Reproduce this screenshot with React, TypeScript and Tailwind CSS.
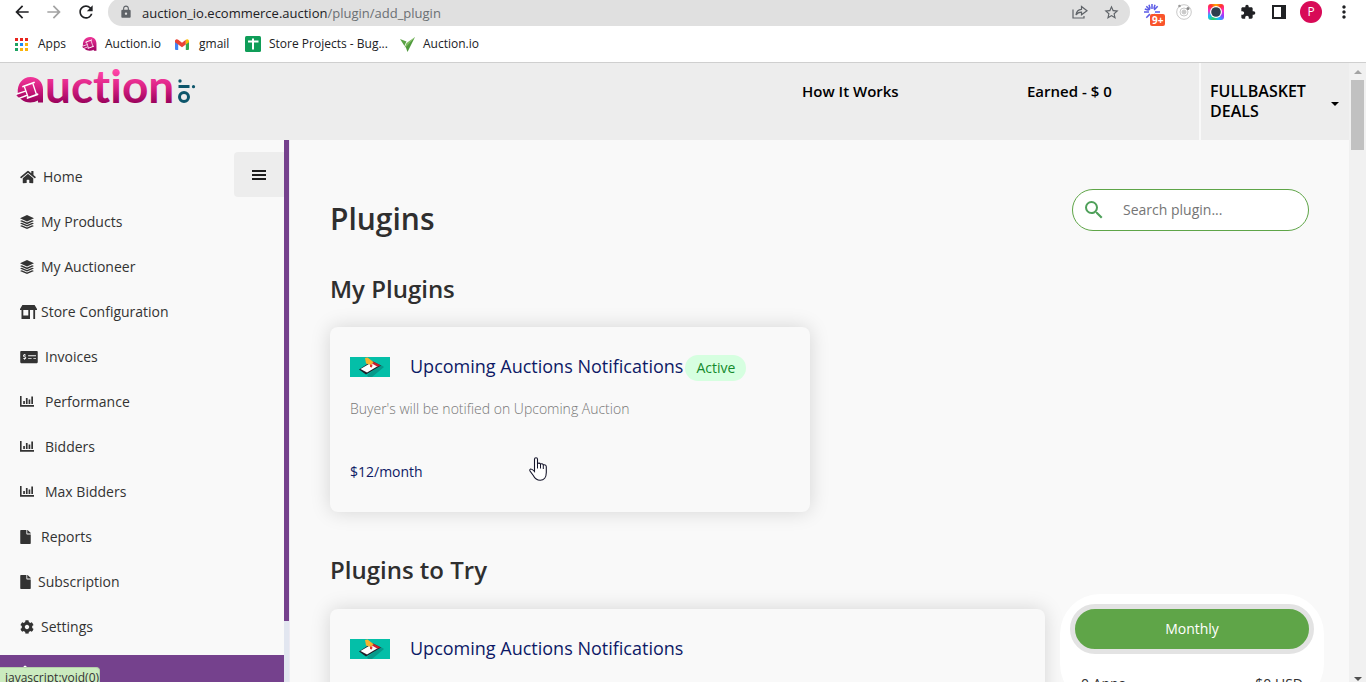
import type { ComponentType, ReactNode } from "react";
import {
  FaHome,
  FaStore,
  FaMoneyCheckAlt,
  FaFile,
  FaCog,
  FaPuzzlePiece,
} from "react-icons/fa";
import {
  MdArrowBack,
  MdArrowForward,
  MdRefresh,
  MdLock,
  MdStarBorder,
  MdExtension,
  MdMoreVert,
  MdSearch,
} from "react-icons/md";

type IconType = ComponentType<{ className?: string }>;

function LayersIcon({ className }: { className?: string }) {
  return (
    <svg viewBox="0 0 14 14" className={className} fill="currentColor" aria-hidden="true">
      <path d="M7 0 14 3.2 7 6.400 0 3.200Z" />
      <path d="M0 6 1.800 5.200 7 7.600 12.200 5.200 14 6 7 9.200Z" />
      <path d="M0 8.500 1.800 7.700 7 10.100 12.200 7.700 14 8.500 7 11.600Z" />
      <path d="M0 11 1.800 10.200 7 12.500 12.200 10.200 14 11 7 14Z" />
    </svg>
  );
}

function StoreIcon({ className }: { className?: string }) {
  return (
    <svg viewBox="0 0 17 14" className={className} fill="currentColor" aria-hidden="true">
      <path d="M2.400 0h12.200L17 4v1H0V4Z" />
      <path d="M1.500 5h1.800v5.500h5V5H10v9H1.500ZM13.300 5h1.800v9h-1.800Z" />
    </svg>
  );
}

function BarsIcon({ className }: { className?: string }) {
  return (
    <svg viewBox="0 0 14 11" className={className} fill="currentColor" aria-hidden="true">
      <path d="M0 0h1.600v9H14v1.800H0ZM3.200 5h1.700v3H3.200ZM5.900 2h1.700v6H5.900ZM8.600 3.500h1.700V8H8.600ZM11.300.5H13V8h-1.700Z" />
    </svg>
  );
}

type NavItem = { label: string; icon: IconType; iconClass: string; slot: string };

const navItems: NavItem[] = [
  { label: "Home", icon: FaHome, iconClass: "h-[14px] w-4", slot: "w-[23px]" },
  { label: "My Products", icon: LayersIcon, iconClass: "size-[14px]", slot: "w-[21px]" },
  { label: "My Auctioneer", icon: LayersIcon, iconClass: "size-[14px]", slot: "w-[21px]" },
  { label: "Store Configuration", icon: StoreIcon, iconClass: "h-[14px] w-[17px]", slot: "w-[21px]" },
  { label: "Invoices", icon: FaMoneyCheckAlt, iconClass: "h-[14px] w-[18px]", slot: "w-[25px]" },
  { label: "Performance", icon: BarsIcon, iconClass: "h-[11px] w-[14px]", slot: "w-[25px]" },
  { label: "Bidders", icon: BarsIcon, iconClass: "h-[11px] w-[14px]", slot: "w-[25px]" },
  { label: "Max Bidders", icon: BarsIcon, iconClass: "h-[11px] w-[14px]", slot: "w-[25px]" },
  { label: "Reports", icon: FaFile, iconClass: "h-[14px] w-[11px]", slot: "w-[21px]" },
  { label: "Subscription", icon: FaFile, iconClass: "h-[14px] w-[11px]", slot: "w-[18px]" },
  { label: "Settings", icon: FaCog, iconClass: "size-[14px]", slot: "w-[21px]" },
];

function GavelShape({ fill }: { fill: string }) {
  return (
    <g>
      <path
        d="M14.500 0C22 0 27 5 27 12.500V25.500H22V23.500C17 26.500 9 26 5.500 22.500L2 20 0 17.800 1.800 16C1 7 6.500 0 14.500 0Z"
        fill={fill}
      />
      <g fill="none" stroke="#fff" strokeLinecap="round" strokeLinejoin="round">
        <path d="M7 9.500 18 5.500" strokeWidth="1.800" />
        <path d="M11.500 21 21.500 17.300" strokeWidth="1.800" />
        <path d="M8.500 10 12 20M17 7 20.300 17" strokeWidth="1.300" />
        <path d="M0 17.300 9.500 14.200" strokeWidth="1.400" />
        <path d="M3 21.300 10.500 18.500" strokeWidth="1.400" />
      </g>
    </g>
  );
}

function Emblem({ className }: { className?: string }) {
  return (
    <svg viewBox="0 0 28 26" className={className} aria-hidden="true">
      <defs>
        <linearGradient id="mark" x1="0" y1="0" x2="0" y2="1">
          <stop offset="0" stopColor="#f0389a" />
          <stop offset="1" stopColor="#a00060" />
        </linearGradient>
      </defs>
      <GavelShape fill="url(#mark)" />
    </svg>
  );
}

function Logo() {
  return (
    <svg viewBox="0 0 184 40" className="h-10 w-[184px]" role="img" aria-label="auction.io">
      <defs>
        <linearGradient id="word" x1="0" y1="3" x2="0" y2="36" gradientUnits="userSpaceOnUse">
          <stop offset="0" stopColor="#ff45a8" />
          <stop offset="0.500" stopColor="#d92083" />
          <stop offset="1" stopColor="#96005a" />
        </linearGradient>
        <linearGradient id="badge" x1="0" y1="-6" x2="0" y2="26" gradientUnits="userSpaceOnUse">
          <stop offset="0" stopColor="#ff45a8" />
          <stop offset="0.500" stopColor="#d92083" />
          <stop offset="1" stopColor="#96005a" />
        </linearGradient>
      </defs>
      <g transform="translate(0 9)">
        <GavelShape fill="url(#badge)" />
      </g>
      <text
        x="29"
        y="35"
        fontFamily="Lato, sans-serif"
        fontWeight="700"
        fontSize="46"
        fill="url(#word)"
        style={{ fontVariantLigatures: "none" }}
      >
        uction
      </text>
      <g fill="#0d566b">
        <circle cx="164" cy="13" r="1.700" />
        <rect x="162.500" y="17" width="11" height="3" />
        <circle cx="177.500" cy="18.700" r="1.600" />
        <circle cx="168" cy="29" r="4.500" fill="none" stroke="#0d566b" strokeWidth="3" />
      </g>
    </svg>
  );
}

const appDots = [
  "#e8251d", "#e8251d", "#e8251d",
  "#1da362", "#1a8af5", "#fbb40a",
  "#1da362", "#fbb40a", "#fbb40a",
];

function AppsIcon() {
  return (
    <svg viewBox="0 0 13 13" className="size-[13px]" aria-hidden="true">
      {appDots.map((c, i) => (
        <rect key={i} x={(i % 3) * 5} y={Math.floor(i / 3) * 5} width="3" height="3" fill={c} />
      ))}
    </svg>
  );
}

function GmailIcon() {
  return (
    <svg viewBox="0 0 14 11" className="h-[11px] w-[14px]" aria-hidden="true">
      <path d="M0 2v8q0 1 1 1h2.200V4Z" fill="#4285f4" />
      <path d="M14 2v8q0 1-1 1h-2.200V4Z" fill="#34a853" />
      <path d="M0 1.500Q1.500-.6 3.200.8L7 3.700 10.800.8V5.500L7 8.300 3.200 5.500 0 3.200Z" fill="#ea4335" />
      <path d="M10.800.8Q12.500-.6 14 1.500V3.200L10.800 5.500Z" fill="#fbbc04" />
    </svg>
  );
}

function SheetIcon() {
  return (
    <svg viewBox="0 0 16 16" className="size-4" aria-hidden="true">
      <rect width="16" height="16" rx="1.500" fill="#0f9d58" />
      <path d="M3 5.500h10.500M8 2.500v11" stroke="#fff" strokeWidth="2" />
    </svg>
  );
}

function PlaneIcon() {
  return (
    <svg viewBox="0 0 15 15" className="size-[15px]" aria-hidden="true">
      <path d="M15 0 7.500 15 5.500 9.500Z" fill="#4f9a3c" />
      <path d="M15 0 6.500 6 4.500 10.500 6 10Z" fill="#7dbb5f" />
      <path d="M0 2 6.500 4.500 5.500 6.500 4.500 9Z" fill="#5aa345" />
    </svg>
  );
}

function Bookmark({ icon, label, width }: { icon: ReactNode; label: string; width: string }) {
  return (
    <a href="#" className={`flex shrink-0 items-center gap-2 whitespace-nowrap ${width}`}>
      {icon}
      <span>{label}</span>
    </a>
  );
}

function BrowserBar() {
  return (
    <div className="shrink-0 border-b border-[#cfcfcf] bg-white font-['Open_Sans',sans-serif]">
      <div className="flex h-[26px] items-end overflow-hidden pr-3 pl-3">
        <div className="flex h-7 w-24 shrink-0 items-center gap-3 text-[#202124]">
          <button aria-label="Back"><MdArrowBack className="size-5" /></button>
          <button aria-label="Forward"><MdArrowForward className="size-5 text-[#a3a3a3]" /></button>
          <button aria-label="Reload"><MdRefresh className="size-5" /></button>
        </div>
        <div className="flex h-7 flex-1 items-center rounded-full bg-[#e0e0e0] pr-[10px] pl-[11px]">
          <MdLock className="mr-[9px] size-[14px] text-[#5f6368]" />
          <span className="flex-1 pt-px text-[13px] leading-5 text-[#202124]">
            auction_io.ecommerce.auction<span className="text-[#6b6f73]">/plugin/add_plugin</span>
          </span>
          <button aria-label="Share" className="mr-[15px]">
            <svg viewBox="0 0 16 14" className="h-[14px] w-4" fill="none" stroke="#5f6368" strokeWidth="1.200">
              <path d="M1 4.500V13H12V11" />
              <path d="M4 10C4.300 6.500 6.500 4.500 9.500 4.300V1.500L15 5.700 9.500 9.800V7.200C7 7.200 5.300 8 4 10Z" />
            </svg>
          </button>
          <button aria-label="Bookmark this page"><MdStarBorder className="size-[17px] text-[#5f6368]" /></button>
        </div>
        <div className="ml-[14px] flex h-7 shrink-0 items-center gap-4">
          <button aria-label="Extension with new items" className="relative">
            <svg viewBox="0 0 16 16" className="size-4" stroke="#5b5be6" strokeWidth="1.500">
              <path d="M8 0v5M8 11v5M0 8h5M11 8h5M2.300 2.300l3.600 3.600M10.100 10.100l3.600 3.600M13.700 2.300l-3.600 3.600M5.900 10.100l-3.600 3.600M5 .8l1.200 4M11 .8l-1.200 4M.8 5l4 1.200" />
            </svg>
            <span className="absolute top-[10px] left-[6px] rounded-[2px] bg-[#f9542b] px-[2px] text-[10px] leading-3 font-bold text-white">9+</span>
          </button>
          <button aria-label="Orbit extension">
            <svg viewBox="0 0 16 16" className="size-4" fill="none" stroke="#c9c9c9">
              <circle cx="8" cy="8" r="7.300" />
              <circle cx="8" cy="8" r="4" />
              <circle cx="8" cy="8" r="2" fill="#c9c9c9" />
              <circle cx="3.500" cy="2" r="1.300" fill="#999" stroke="none" />
              <circle cx="12" cy="4.500" r="1.500" fill="#888" stroke="none" />
            </svg>
          </button>
          <button aria-label="Capture" className="flex size-4 items-center justify-center rounded-[3px] bg-[conic-gradient(#ffb000,#ff3030,#ff2bd0,#9040ff,#10c0ff,#30d060,#10c0ff,#ff2bd0,#ff3030,#ffb000)]">
            <svg viewBox="0 0 14 14" className="size-[14px]">
              <circle cx="7" cy="7" r="6" fill="#fff" />
              <circle cx="7" cy="7" r="4.800" fill="#2d3f4e" />
            </svg>
          </button>
          <button aria-label="Extensions"><MdExtension className="size-4 text-[#202124]" /></button>
          <button aria-label="Side panel">
            <svg viewBox="0 0 14 14" className="size-[14px]">
              <rect width="14" height="14" fill="#202124" />
              <rect x="2" y="2" width="7" height="10" fill="#fff" />
            </svg>
          </button>
          <button aria-label="Profile" className="-ml-0.5 flex size-[22px] items-center justify-center rounded-full bg-[#d80a57] text-[12px] leading-none text-white">P</button>
          <button aria-label="Menu"><MdMoreVert className="-ml-1 size-5 text-[#202124]" /></button>
        </div>
      </div>
      <div className="flex h-9 items-center pl-[15px] text-[12px] text-[#202124]">
        <Bookmark width="w-[67px]" label="Apps" icon={<span className="w-[15px]"><AppsIcon /></span>} />
        <Bookmark width="w-[93px]" label="Auction.io" icon={<Emblem className="h-4 w-[15px]" />} />
        <Bookmark width="w-[70px]" label="gmail" icon={<span className="w-4"><GmailIcon /></span>} />
        <Bookmark width="w-[155px]" label="Store Projects - Bug..." icon={<SheetIcon />} />
        <Bookmark width="w-[90px]" label="Auction.io" icon={<PlaneIcon />} />
      </div>
    </div>
  );
}

function SiteHeader() {
  return (
    <header className="flex h-[77px] shrink-0 bg-[#ededed] text-[15px] leading-5 font-semibold text-black">
      <a href="#" className="mt-[5px] ml-4 h-10"><Logo /></a>
      <nav className="ml-auto flex pt-[18px]">
        <a href="#" className="w-[225px]">How It Works</a>
        <a href="#" className="w-[172px]">Earned - $ 0</a>
      </nav>
      <button className="flex w-[150px] items-start justify-between border-l-2 border-[#f9f9f9] pt-[18px] pr-[10px] pl-[9px] text-left text-[16px] leading-5">
        <span className="w-[110px]">FULLBASKET DEALS</span>
        <svg viewBox="0 0 8 4" className="mt-[21px] h-1 w-2"><path d="M0 0h8L4 4Z" /></svg>
      </button>
    </header>
  );
}

function Sidebar() {
  return (
    <aside className="relative flex w-[290px] shrink-0">
      <nav className="min-w-0 flex-1 pt-[14px]">
        {navItems.map(({ label, icon: Icon, iconClass, slot }) => (
          <a key={label} href="#" className="flex h-[45px] items-center pl-5 text-[14px] text-[#333]">
            <span className={`shrink-0 ${slot}`}><Icon className={iconClass} /></span>
            {label}
          </a>
        ))}
        <a href="#" className="mt-[6px] flex h-[45px] items-start bg-[#75418d] pt-[7px] pl-5 text-[14px] text-white">
          <span className="w-[21px] shrink-0 pt-[3px]"><FaPuzzlePiece className="size-[14px]" /></span>
          Plugins
        </a>
      </nav>
      <div className="w-[6px] border-r border-[#eceaf2] bg-[#e2e6f0]">
        <div className="h-[481px] bg-[#75418d]" />
      </div>
      <button aria-label="Toggle menu" className="absolute top-3 right-[6px] flex h-[45px] w-[50px] items-center justify-center rounded-l bg-[#ededed]">
        <svg viewBox="0 0 14 10" className="h-[10px] w-[14px]" fill="#1d1d1d">
          <path d="M0 0h14v2H0ZM0 4h14v2H0ZM0 8h14v2H0Z" />
        </svg>
      </button>
    </aside>
  );
}

function PluginArt() {
  return (
    <svg viewBox="0 0 40 20" className="h-5 w-10" aria-hidden="true">
      <rect width="40" height="20" fill="#04bfa8" />
      <path d="M17 18 31 8 34 10 22 20H18Z" fill="#07998a" />
      <path d="M9 12.500 22 4 31 8.500 16 17.500Z" fill="#1d1d26" />
      <path d="M10.500 12 21.500 5.500 28 9 17 15.500Z" fill="#fff" />
      <path d="M23 4.500 30.500 8.300 27.500 9.800 22 6.500Z" fill="#c7202c" />
      <path d="M15 1 17.500.5 23.500 5 21 8 16 6.500Z" fill="#f5b32f" />
      <path d="M20 7.500l2.500 0-.5 3-2-.5Z" fill="#e3342f" />
    </svg>
  );
}

function PluginCard({ active, className }: { active?: boolean; className: string }) {
  return (
    <article className={`rounded-lg bg-[#f9f9f9] px-5 pt-5 pb-7 shadow-[0_0_20px_rgba(0,0,0,0.15)] ${className}`}>
      <div className="flex h-10 items-center">
        <PluginArt />
        <h3 className="ml-5 pb-0.5 text-[18px] text-[#0d1a66]">Upcoming Auctions Notifications</h3>
        {active && (
          <span className="mt-0.5 ml-0.5 rounded-full bg-[#d6ffe0] px-[11px] text-[14px] leading-[26px] text-[#148a2c]">Active</span>
        )}
      </div>
      <p className="mt-[10px] text-[14px] leading-6 font-light text-[#777]">Buyer's will be notified on Upcoming Auction</p>
      <p className="mt-[39px] text-[14px] leading-6 text-[#0d1a66]">$12/month</p>
    </article>
  );
}

function Content() {
  return (
    <main className="min-w-0 flex-1 pt-[49px] pr-[25px] pl-10">
      <div className="mr-[15px] flex h-[60px] items-start justify-between">
        <h1 className="text-[30px] leading-[60px] font-semibold">Plugins</h1>
        <div className="flex h-[42px] w-[237px] items-center rounded-full border border-[#5fa548] bg-white pl-[9px]">
          <label htmlFor="search" aria-label="Search plugins"><MdSearch className="size-6 text-[#4fa05a]" /></label>
          <input id="search" type="search" placeholder="Search plugin..." className="ml-[17px] w-40 bg-transparent pb-0.5 text-[14px] outline-none placeholder:text-[#757575]" />
        </div>
      </div>
      <h2 className="mt-[22px] mb-5 text-[24px] leading-9 font-semibold">My Plugins</h2>
      <PluginCard active className="max-w-[480px]" />
      <h2 className="mt-10 mb-[21px] text-[24px] leading-9 font-semibold">Plugins to Try</h2>
      <div className="flex items-start gap-[15px]">
        <PluginCard className="min-w-0 flex-1" />
        <section className="-mt-[15px] w-[264px] shrink-0 rounded-[40px] bg-white p-[10px]">
          <button className="h-[50px] w-full rounded-full border-[5px] border-[#e3e3e3] bg-[#5fa548] pb-0.5 text-[14px] font-medium text-white">Monthly</button>
          <div className="mt-5 flex justify-between px-[11px] text-[14px] leading-5">
            <span>0 Apps</span>
            <span>$0 USD</span>
          </div>
        </section>
      </div>
    </main>
  );
}

function Scrollbar() {
  return (
    <div className="flex w-[17px] shrink-0 flex-col items-center justify-between bg-[#f1f1f1]" aria-hidden="true">
      <div className="flex w-full flex-col items-center pt-[7px]">
        <svg viewBox="0 0 8 4" className="h-1 w-2"><path d="M0 4h8L4 0Z" fill="#a3a3a3" /></svg>
        <div className="mt-[6px] h-[70px] w-[13px] bg-[#c1c1c1]" />
      </div>
      <svg viewBox="0 0 8 4" className="mb-px h-1 w-2"><path d="M0 0h8L4 4Z" fill="#505050" /></svg>
    </div>
  );
}

function HandCursor() {
  return (
    <svg viewBox="0 0 18 24" className="pointer-events-none absolute top-[457px] left-[529px] h-6 w-[18px]" aria-hidden="true">
      <path
        d="M5.500 14.500V2.200Q5.500.7 7 .7T8.500 2.200V6.500Q10.500 5.500 11.500 7 13.500 6.300 14.300 7.800 17.300 7.300 17.300 10V15.500C17.300 20 15 23.300 11.200 23.300 7.500 23.300 5.800 21.500 4.300 18.500L1 14Q.4 12.500 1.600 12 3 11.800 5.500 14.500Z"
        fill="#fff"
        stroke="#15152a"
        strokeWidth="1.100"
      />
      <path d="M8.500 6.500V11.500M11.500 7V11.500M14.300 8V12" stroke="#15152a" strokeWidth="1" />
    </svg>
  );
}

export default function App() {
  return (
    <div className="relative flex h-screen flex-col overflow-hidden bg-[#f9f9f9] font-['Open_Sans',sans-serif] text-[#2f2f2f]">
      <BrowserBar />
      <div className="flex min-h-0 flex-1">
        <div className="flex min-w-0 flex-1 flex-col overflow-hidden">
          <SiteHeader />
          <div className="flex min-h-0 flex-1 overflow-hidden">
            <Sidebar />
            <Content />
          </div>
        </div>
        <Scrollbar />
      </div>
      <div role="status" className="absolute bottom-0 left-0 h-[15px] w-[100px] overflow-hidden rounded-tr border-t border-r border-[#b5cdaa] bg-[#cbebbf] pl-[5px] text-[12px] leading-5 text-[#333]">
        javascript:void(0)
      </div>
      <HandCursor />
    </div>
  );
}
